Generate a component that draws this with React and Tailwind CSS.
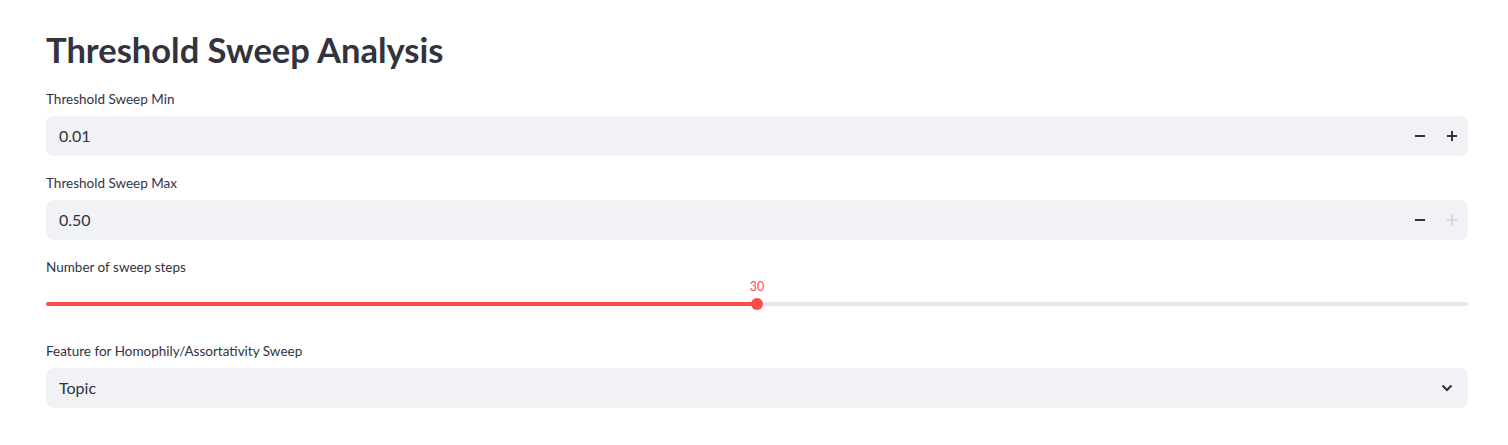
import React from "react";

function Label({ children }) {
  return <div className="h-[28px] pb-[6px] text-[13.5px] leading-[22px] text-[#31333f]">{children}</div>;
}

function NumberInput({ label, value, plusDisabled }) {
  return (
    <div className="flex flex-col">
      <Label>{label}</Label>
      <div className="flex h-[40px] items-center rounded-[8px] bg-[#f0f2f6]">
        <div className="flex-1 pl-[13px] text-[16px] text-[#31333f]">{value}</div>
        <div className="flex h-full items-center">
          <button className="flex h-full w-[32px] items-center justify-center">
            <svg width="10" height="10" viewBox="0 0 10 10"><rect x="0" y="4" width="10" height="2" fill="#31333f" /></svg>
          </button>
          <button className="flex h-full w-[32px] items-center justify-center">
            <svg width="10" height="10" viewBox="0 0 10 10">
              <rect x="0" y="4" width="10" height="2" fill={plusDisabled ? "#d5d7de" : "#31333f"} />
              <rect x="4" y="0" width="2" height="10" fill={plusDisabled ? "#d5d7de" : "#31333f"} />
            </svg>
          </button>
        </div>
      </div>
    </div>
  );
}

export default function App() {
  return (
    <div className="min-h-[445px] bg-white pl-[46px] pr-[40px]" style={{ fontFamily: "Lato, 'Noto Sans', sans-serif" }}>
      <h1 className="pt-[26px] pb-[14px] text-[34.5px] font-bold leading-[48px] text-[#31333f]">Threshold Sweep Analysis</h1>
      <div className="flex flex-col gap-[16px]">
        <NumberInput label="Threshold Sweep Min" value="0.01" />
        <NumberInput label="Threshold Sweep Max" value="0.50" plusDisabled />
        <div className="flex flex-col">
          <Label>Number of sweep steps</Label>
          <div className="relative h-[40px]">
            <div className="absolute left-0 right-0 top-[18px] h-[4px] rounded-full bg-[#e6e6ee]" />
            <div className="absolute left-0 top-[18px] h-[4px] w-1/2 rounded-l-full bg-[#ff4b4b]" />
            <div className="absolute left-1/2 top-[14px] h-[12px] w-[12px] -translate-x-1/2 rounded-full bg-[#ff4b4b]" />
            <div className="absolute left-1/2 top-[-4px] -translate-x-1/2 text-[12.5px] leading-[14px] text-[#ff4b4b]">30</div>
          </div>
        </div>
        <div className="flex flex-col">
          <Label>Feature for Homophily/Assortativity Sweep</Label>
          <div className="flex h-[40px] items-center rounded-[8px] bg-[#f0f2f6] pl-[13px] pr-[15px]">
            <div className="flex-1 text-[16px] text-[#31333f]">Topic</div>
            <svg width="12" height="8" viewBox="0 0 12 8"><path d="M1.5 1.5 L6 6 L10.5 1.5" fill="none" stroke="#31333f" strokeWidth="2.2" /></svg>
          </div>
        </div>
      </div>
    </div>
  );
}
